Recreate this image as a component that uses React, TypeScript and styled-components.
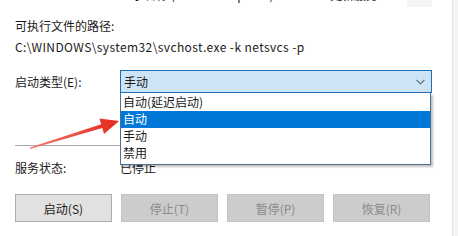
import React from "react";
import styled, { createGlobalStyle } from "styled-components";

const GlobalStyle = createGlobalStyle`
  body {
    margin: 0;
    background: #ffffff;
    font-family: "Noto Sans CJK SC", "Noto Sans", sans-serif;
    font-size: 12px;
    color: #1a1a1a;
  }
`;

const Page = styled.div`
  position: relative;
  width: 458px;
  height: 236px;
  overflow: hidden;
  display: flex;
`;

const Main = styled.div`
  flex: 1;
  padding-left: 15px;
  display: flex;
  flex-direction: column;
`;

const SideStrip = styled.div`
  width: 5px;
  background: #f3f3f3;
  border-left: 1px solid #e4e4e4;
`;

const TopClip = styled.div`
  height: 7px;
  margin-left: 105px;
  display: flex;
  align-items: flex-start;
  gap: 10px;
`;

const CutText = styled.div`
  width: 277px;
  height: 3px;
  overflow: hidden;
  line-height: 17px;
  white-space: nowrap;
  span {
    display: block;
    margin-top: -14px;
  }
`;

const GhostBox = styled.div`
  width: 25px;
  height: 7px;
  background: #f4f4f4;
`;

const Label = styled.div<{ $top?: number; $latin?: boolean }>`
  margin-top: ${(p) => p.$top ?? 0}px;
  line-height: 17px;
  white-space: nowrap;
  letter-spacing: ${(p) => (p.$latin ? "0.4px" : "0")};
`;

const Row = styled.div<{ $top: number }>`
  margin-top: ${(p) => p.$top}px;
  display: flex;
  align-items: center;
  height: 23px;
`;

const RowLabel = styled.div`
  width: 105px;
  line-height: 17px;
`;

const ComboWrap = styled.div`
  position: relative;
  width: 312px;
  height: 23px;
`;

const Combo = styled.div`
  box-sizing: border-box;
  height: 23px;
  border: 1px solid #1f6fb8;
  background: #cde4f7;
  display: flex;
  align-items: center;
  justify-content: space-between;
  padding: 0 6px 0 3px;
`;

const DropList = styled.div`
  position: absolute;
  z-index: 2;
  top: 23px;
  left: 0;
  width: 311px;
  box-sizing: border-box;
  border: 1px solid #4d6f94;
  border-top: none;
  background: #ffffff;
  padding: 1px 0 2px;
  box-shadow: 2px 2px 2px rgba(0, 0, 0, 0.25);
`;

const Option = styled.div<{ $selected?: boolean }>`
  height: 17px;
  line-height: 16px;
  padding-left: 2px;
  background: ${(p) => (p.$selected ? "#0078d7" : "transparent")};
  color: ${(p) => (p.$selected ? "#ffffff" : "#1a1a1a")};
`;

const Separator = styled.div`
  margin-top: 52px;
  width: 415px;
  height: 1px;
  background: #a9a9a9;
  border-bottom: 1px solid #ffffff;
`;

const StatusRow = styled.div`
  margin-top: 12px;
  display: flex;
  line-height: 17px;
`;

const Buttons = styled.div`
  margin-top: 18px;
  display: flex;
  gap: 9px;
`;

const Button = styled.div<{ $disabled?: boolean }>`
  box-sizing: border-box;
  width: 97px;
  height: 28px;
  display: flex;
  align-items: center;
  justify-content: center;
  border: 1px solid ${(p) => (p.$disabled ? "#c4c4c4" : "#adadad")};
  background: ${(p) => (p.$disabled ? "#cccccc" : "#e1e1e1")};
  color: ${(p) => (p.$disabled ? "#8a8a8a" : "#1a1a1a")};
`;

const Arrow = styled.svg`
  position: absolute;
  z-index: 3;
  left: 0;
  top: 0;
  pointer-events: none;
`;

function Chevron() {
  return (
    <svg width="9" height="6" viewBox="0 0 9 6">
      <path d="M0.5 0.8 L4.5 4.8 L8.5 0.8" fill="none" stroke="#5a6470" strokeWidth="1.1" />
    </svg>
  );
}

function App() {
  return (
    <Page>
      <GlobalStyle />
      <Main>
        <TopClip>
          <CutText>
            <span>显示名称 (Windows Update)  Windows 更新服务</span>
          </CutText>
          <GhostBox />
        </TopClip>
        <Label $top={10}>可执行文件的路径:</Label>
        <Label $top={4} $latin>
          C:\WINDOWS\system32\svchost.exe -k netsvcs -p
        </Label>
        <Row $top={15}>
          <RowLabel>启动类型(E):</RowLabel>
          <ComboWrap>
            <Combo>
              <span>手动</span>
              <Chevron />
            </Combo>
            <DropList>
              <Option>自动(延迟启动)</Option>
              <Option $selected>自动</Option>
              <Option>手动</Option>
              <Option>禁用</Option>
            </DropList>
          </ComboWrap>
        </Row>
        <Separator />
        <StatusRow>
          <RowLabel>服务状态:</RowLabel>
          <span>已停止</span>
        </StatusRow>
        <Buttons>
          <Button>启动(S)</Button>
          <Button $disabled>停止(T)</Button>
          <Button $disabled>暂停(P)</Button>
          <Button $disabled>恢复(R)</Button>
        </Buttons>
      </Main>
      <SideStrip />
      <Arrow width="458" height="236" viewBox="0 0 458 236">
        <defs>
          <linearGradient id="arrowFill" x1="30" y1="148" x2="118" y2="120" gradientUnits="userSpaceOnUse">
            <stop offset="0" stopColor="#f07a70" />
            <stop offset="1" stopColor="#e5281e" />
          </linearGradient>
        </defs>
        <path
          d="M30 149 L102.3 128 L104 134 L119 121 L99.4 118.4 L101.1 124.2 L30 147.5 Z"
          fill="url(#arrowFill)"
        />
      </Arrow>
    </Page>
  );
}

export default App;
